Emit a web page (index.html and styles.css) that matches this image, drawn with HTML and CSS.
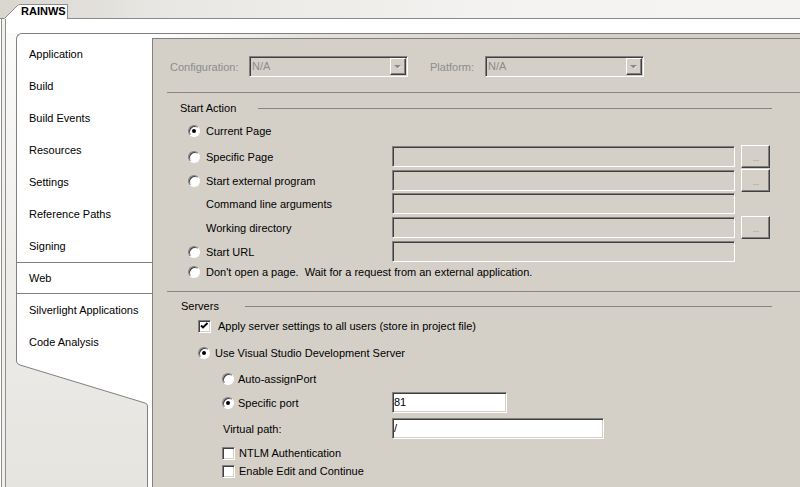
FILE: index.html
```html
<!DOCTYPE html>
<html>
<head>
<meta charset="utf-8">
<title>RAINWS - Web</title>
<link rel="stylesheet" href="styles.css">
</head>
<body>
<div class="tabstrip">
  <div class="doctab">
    <svg class="doctab-shape" width="65" height="15" viewBox="0 0 65 15">
      <path d="M0,15 L13.5,1.5 Q14.5,0.5 16.5,0.5 L63.5,0.5 L63.5,15 Z" fill="#ffffff"/>
      <path d="M0.5,14.5 L13.5,1.5 Q14.5,0.5 16.5,0.5 L63.5,0.5 L63.5,15" fill="none" stroke="#8c8c8c"/>
    </svg>
    <span class="doctab-text">RAINWS</span>
  </div>
</div>
<div class="frame">
  <div class="inner">
    <div class="band"></div>
    <div class="body">
      <div class="side">
        <ul class="nav">
          <li>Application</li>
          <li>Build</li>
          <li>Build Events</li>
          <li>Resources</li>
          <li>Settings</li>
          <li>Reference Paths</li>
          <li>Signing</li>
          <li class="sel">Web</li>
          <li>Silverlight Applications</li>
          <li>Code Analysis</li>
        </ul>
        <svg class="nav-foot" width="136" height="129" viewBox="0 0 136 129">
          <path d="M0,0 L136,0 L136,129 L131,129 L131,48 Q131,45.6 129,45 L4,7 Q0.5,6 0.5,3 Z" fill="#ffffff"/>
          <path d="M0.5,0 L0.5,3 Q0.5,6 4,7 L129,45 Q131.5,45.8 131.5,48 L131.5,129" fill="none" stroke="#808080"/>
        </svg>
      </div>
      <div class="main">
        <div class="topgap"></div>
        <div class="content">
          <div class="row h21 mt17 cfg">
            <span class="dis lbl-cfg">Configuration:</span>
            <div class="combo"><span class="combo-val">N/A</span><span class="combo-btn"><svg width="7" height="5" viewBox="0 0 7 5"><polygon points="1,1 7,1 4,4" fill="#ffffff"/><polygon points="0,0 7,0 3.5,3.5" fill="#8a8a8a"/></svg></span></div>
            <span class="dis lbl-plat">Platform:</span>
            <div class="combo"><span class="combo-val">N/A</span><span class="combo-btn"><svg width="7" height="5" viewBox="0 0 7 5"><polygon points="1,1 7,1 4,4" fill="#ffffff"/><polygon points="0,0 7,0 3.5,3.5" fill="#8a8a8a"/></svg></span></div>
          </div>
          <div class="sep mt15"></div>

          <div class="row h16 mt7 group">
            <span class="gtitle gt-start">Start Action</span><span class="gline"></span>
          </div>
          <div class="row h16 mt7">
            <span class="lcol pl21 g6"><span class="radio on"></span><span>Current Page</span></span>
          </div>
          <div class="row h23 mt6">
            <span class="lcol w225 pl21 g6"><span class="radio"></span><span>Specific Page</span></span>
            <span class="tb wide"></span><span class="dots">...</span>
          </div>
          <div class="row h23 mt1">
            <span class="lcol w225 pl21 g6"><span class="radio"></span><span>Start external program</span></span>
            <span class="tb wide"></span><span class="dots">...</span>
          </div>
          <div class="row h21 mt1">
            <span class="lcol w225 pl39"><span>Command line arguments</span></span>
            <span class="tb wide"></span>
          </div>
          <div class="row h23 mt2">
            <span class="lcol w225 pl39"><span>Working directory</span></span>
            <span class="tb wide"></span><span class="dots">...</span>
          </div>
          <div class="row h21 mt2">
            <span class="lcol w225 pl21 g6"><span class="radio"></span><span>Start URL</span></span>
            <span class="tb wide"></span>
          </div>
          <div class="row h16 mt2">
            <span class="lcol pl21 g6"><span class="radio"></span><span>Don't open a page.&nbsp; Wait for a request from an external application.</span></span>
          </div>
          <div class="sep mt11"></div>

          <div class="row h16 mt6 group">
            <span class="gtitle gt-servers">Servers</span><span class="gline"></span>
          </div>
          <div class="row h16 mt4">
            <span class="lcol pl31 g7"><span class="check"><svg width="11" height="11" viewBox="0 0 11 11"><polyline points="2,4.5 4,6.5 8.5,2" fill="none" stroke="#000" stroke-width="1.9"/></svg></span><span>Apply server settings to all users (store in project file)</span></span>
          </div>
          <div class="row h16 mt11">
            <span class="lcol pl31 g5"><span class="radio on"></span><span>Use Visual Studio Development Server</span></span>
          </div>
          <div class="row h16 mt10">
            <span class="lcol pl55 g4"><span class="radio"></span><span>Auto-assignPort</span></span>
          </div>
          <div class="row h21 mt5">
            <span class="lcol w225 pl55 g4"><span class="radio on"></span><span>Specific port</span></span>
            <span class="tb white port">81</span>
          </div>
          <div class="row h21 mt5">
            <span class="lcol w225 pl56"><span>Virtual path:</span></span>
            <span class="tb white vpath">/</span>
          </div>
          <div class="row h16 mt6">
            <span class="lcol pl55 g4"><span class="check"></span><span>NTLM Authentication</span></span>
          </div>
          <div class="row h16 mt2">
            <span class="lcol pl55 g4"><span class="check"></span><span>Enable Edit and Continue</span></span>
          </div>
        </div>
      </div>
    </div>
  </div>
</div>
</body>
</html>
```

FILE: styles.css
```css
html, body {
  margin: 0;
  padding: 0;
}
body {
  width: 800px;
  height: 487px;
  overflow: hidden;
  font-family: Tahoma, "Liberation Sans", Arial, sans-serif;
  font-size: 11px;
  color: #000;
  background: #ffffff;
}

/* ---------- document tab strip ---------- */
.tabstrip {
  height: 14px;
  padding: 4px 0 0 4px;
  border-bottom: 1px solid #8a8a8a;
  background: linear-gradient(90deg, #d9d6d0 0%, #e9e7e3 20%, #f3f2f0 60%, #f5f4f2 100%);
}
.doctab {
  position: relative;
  width: 65px;
  height: 15px;
}
.doctab-shape {
  position: absolute;
  left: 0;
  top: 0;
  display: block;
}
.doctab-text {
  position: relative;
  display: block;
  padding-left: 17px;
  line-height: 15px;
  font-weight: bold;
  font-size: 11px;
}

/* ---------- frame ---------- */
.frame {
  height: 468px;
  margin-left: 1px;
  border-left: 1px solid #8d8d8d;
  padding-left: 3px;
  background: #f1f0ed;
}
.inner {
  height: 100%;
  border-left: 1px solid #8d8d8d;
  display: flex;
  flex-direction: column;
}
.band {
  height: 14px;
  background: #ffffff;
  flex: none;
}
.body {
  flex: 1;
  display: flex;
  min-height: 0;
}

/* ---------- left navigation ---------- */
.side {
  width: 146px;
  flex: none;
  display: flex;
  flex-direction: column;
  background: linear-gradient(180deg, #fbfbfa 0%, #efeeeb 50%, #e6e4df 100%);
}
.nav {
  list-style: none;
  margin: 0 0 0 10px;
  padding: 4px 0 0 0;
  border-left: 1px solid #808080;
  border-top: 1px solid #808080;
  border-top-left-radius: 6px;
  background: #ffffff;
}
.nav li {
  height: 32px;
  line-height: 32px;
  padding-left: 12px;
  white-space: nowrap;
  box-sizing: border-box;
}
.nav li.sel {
  border-top: 1px solid #808080;
  border-bottom: 1px solid #808080;
  line-height: 30px;
}
.nav-foot {
  display: block;
  margin-left: 10px;
  flex: none;
}

/* ---------- main page ---------- */
.main {
  flex: 1;
  display: flex;
  flex-direction: column;
  border-top: 1px solid #808080;
}
.topgap {
  height: 4px;
  flex: none;
  background: linear-gradient(90deg, #ffffff 0%, #e4e1dc 25%, #d4d0c8 70%);
}
.content {
  flex: 1;
  border-top: 1px solid #808080;
  border-left: 1px solid #808080;
  background: #d4d0c8;
  padding-left: 14px;
}

.row {
  display: flex;
  align-items: center;
  white-space: nowrap;
}
.h16 { height: 16px; }
.h21 { height: 21px; }
.h23 { height: 23px; }
.mt1 { margin-top: 1px; }
.mt2 { margin-top: 2px; }
.mt4 { margin-top: 4px; }
.mt5 { margin-top: 5px; }
.mt6 { margin-top: 6px; }
.mt7 { margin-top: 7px; }
.mt10 { margin-top: 10px; }
.mt11 { margin-top: 11px; }
.mt15 { margin-top: 15px; }
.mt17 { margin-top: 17px; }

.cfg { padding-left: 3px; }
.dis { color: #8c8c8c; }
.lbl-cfg { width: 79px; }
.lbl-plat { width: 55px; margin-left: 22px; }

.combo {
  width: 159px;
  height: 21px;
  box-sizing: border-box;
  border: 1px solid;
  border-color: #808080 #ffffff #ffffff #808080;
  box-shadow: inset 1px 1px 0 #404040;
  background: #d4d0c8;
  display: flex;
  align-items: flex-start;
  justify-content: space-between;
  padding: 1px 1px 0 2px;
}
.combo-val {
  color: #8c8c8c;
  line-height: 17px;
}
.combo-btn {
  width: 16px;
  height: 17px;
  box-sizing: border-box;
  border: 1px solid;
  border-color: #ffffff #404040 #404040 #ffffff;
  box-shadow: inset -1px -1px 0 #808080;
  display: flex;
  align-items: center;
  justify-content: center;
}
.combo-btn svg { display: block; margin: 1px 1px 0 0; }

.sep {
  height: 1px;
  background: #858585;
}

.group { padding-left: 13px; }
.gtitle { flex: none; }
.gt-start { width: 78px; }
.gt-servers { width: 64px; padding-left: 1px; }
.gline {
  flex: 1;
  height: 1px;
  margin-right: 28px;
  background: #858585;
}

.lcol {
  display: flex;
  align-items: center;
  flex: none;
  box-sizing: border-box;
}
.w225 { width: 225px; }
.pl21 { padding-left: 21px; }
.pl31 { padding-left: 31px; }
.pl39 { padding-left: 39px; }
.pl55 { padding-left: 55px; }
.pl56 { padding-left: 56px; }
.g4 { gap: 4px; }
.g5 { gap: 5px; }
.g6 { gap: 6px; }
.g7 { gap: 7px; }

.radio {
  width: 12px;
  height: 12px;
  box-sizing: border-box;
  border-radius: 50%;
  border: 1px solid;
  border-color: #808080 #ffffff #ffffff #808080;
  background: #ffffff;
  box-shadow: inset 1px 1px 0 #404040;
  flex: none;
  display: flex;
  align-items: center;
  justify-content: center;
}
.radio.on::after {
  content: "";
  width: 4px;
  height: 4px;
  border-radius: 50%;
  background: #000;
}

.check {
  width: 13px;
  height: 13px;
  box-sizing: border-box;
  border: 1px solid;
  border-color: #808080 #ffffff #ffffff #808080;
  box-shadow: inset 1px 1px 0 #404040, inset -1px -1px 0 #d4d0c8;
  background: #ffffff;
  flex: none;
}
.check svg { display: block; }

.tb {
  height: 21px;
  box-sizing: border-box;
  border: 1px solid;
  border-color: #808080 #ffffff #ffffff #808080;
  box-shadow: inset 1px 1px 0 #404040;
  background: #d4d0c8;
  flex: none;
  padding-left: 1px;
  line-height: 19px;
}
.tb.wide { width: 343px; }
.tb.white {
  background: #ffffff;
  box-shadow: inset 1px 1px 0 #404040, inset -1px -1px 0 #d4d0c8;
}
.tb.port { width: 115px; }
.tb.vpath { width: 212px; }

.dots {
  width: 29px;
  height: 23px;
  margin-left: 6px;
  box-sizing: border-box;
  border: 1px solid;
  border-color: #ffffff #404040 #404040 #ffffff;
  box-shadow: inset -1px -1px 0 #808080;
  color: #9a9a9a;
  font-size: 9px;
  text-align: center;
  line-height: 24px;
  flex: none;
  letter-spacing: -0.5px;
}
```
